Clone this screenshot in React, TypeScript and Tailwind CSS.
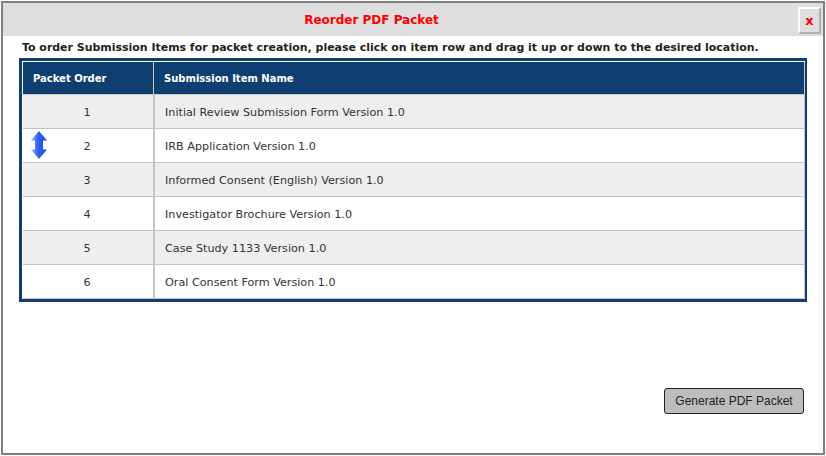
const rows = [
  "Initial Review Submission Form Version 1.0",
  "IRB Application Version 1.0",
  "Informed Consent (English) Version 1.0",
  "Investigator Brochure Version 1.0",
  "Case Study 1133 Version 1.0",
  "Oral Consent Form Version 1.0",
];

function MoveIcon() {
  return (
    <svg width="16" height="28" viewBox="0 0 16 28" className="absolute left-[8px] top-[2px]">
      <defs>
        <linearGradient id="moveFill" x1="0" y1="0" x2="1" y2="0">
          <stop offset="0" stopColor="#9dbcf8" />
          <stop offset="0.4" stopColor="#3568f5" />
          <stop offset="1" stopColor="#1c40d8" />
        </linearGradient>
      </defs>
      <path d="M8 0L16 9.5H12V18.5H16L8 28L0 18.5H4V9.5H0Z" fill="url(#moveFill)" />
    </svg>
  );
}

export default function App() {
  return (
    <div className="h-[456px] w-[826px] bg-white p-[1px]">
      <div className="flex h-[454px] w-[824px] flex-col border-2 border-[#808080] bg-white font-['DejaVu_Sans',sans-serif] text-[11.2px] text-[#333333]">
        <div className="relative flex h-[33px] shrink-0 items-center justify-center bg-[#dedede] pr-[83px]">
          <span className="text-[12px] font-bold text-[#ff0000]">Reorder PDF Packet</span>
          <button className="absolute right-[2px] top-[4px] flex h-[27px] w-[23px] items-center justify-center border-2 border-t-white border-l-white border-r-[#b0b0b0] border-b-[#b0b0b0] bg-[#dedede] text-[13px] font-bold text-[#ff0000]">
            x
          </button>
        </div>
        <p className="ml-[19px] mt-[3px] h-[17px] text-[10.96px] leading-[18px] font-bold text-[#222222]">
          To order Submission Items for packet creation, please click on item row and drag it up or down to the desired location.
        </p>
        <div className="ml-[16px] mt-[2px] w-[788px] border-y-[3px] border-l-[3px] border-r-2 border-[#0f3f70] pl-[1px] pt-[1px]">
          <div className="border-r border-[#c8c8c8]">
            <div className="flex h-[33px] border-b border-[#c8c8c8] bg-[#0f3f70] text-[10px] font-bold text-white">
              <div className="flex w-[131px] items-center border-r border-[#c8c8c8] pl-[10px]">Packet Order</div>
              <div className="flex flex-1 items-center pl-[10px]">Submission Item Name</div>
            </div>
            {rows.map((name, i) => (
              <div
                key={name}
                className={`relative flex h-[34px] border-b border-[#c4c4c4] ${i % 2 === 0 ? "bg-[#eeeeee]" : "bg-white"}`}
              >
                {i === 1 && <MoveIcon />}
                <div className="flex w-[132px] items-center justify-center border-r-2 border-[#c4c4c4] pr-[2px] pt-[3px]">{i + 1}</div>
                <div className="flex flex-1 items-center pl-[10px] pt-[3px]">{name}</div>
              </div>
            ))}
          </div>
        </div>
        <div className="mr-[19px] mt-[86px] flex justify-end">
          <button className="h-[26px] w-[140px] rounded-[3px] border border-[#222222] bg-[#bdbdbd] font-['Liberation_Sans',sans-serif] text-[12px] text-[#222222]">
            Generate PDF Packet
          </button>
        </div>
      </div>
    </div>
  );
}
